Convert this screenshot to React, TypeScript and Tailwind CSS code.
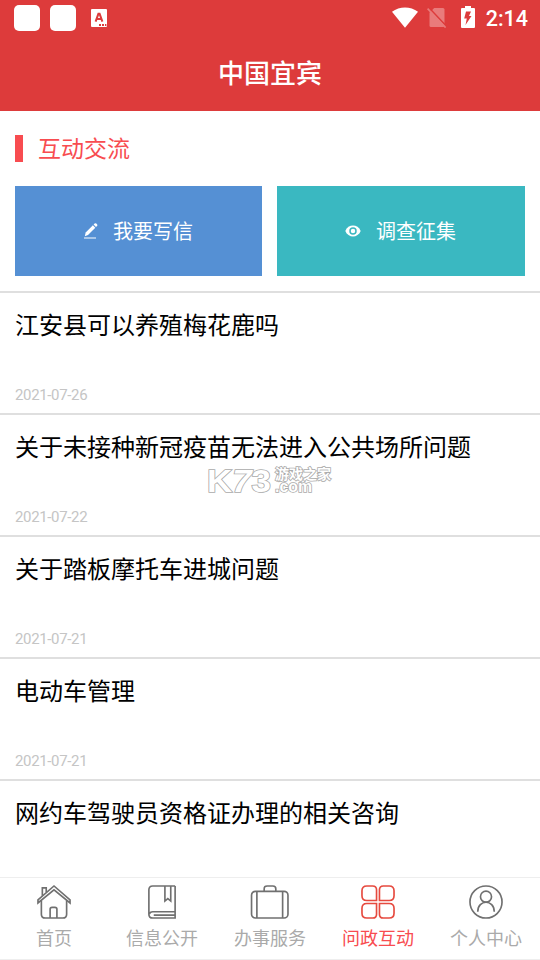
import React from 'react';

interface Letter {
  title: string;
  date?: string;
}

const letters: Letter[] = [
  { title: '江安县可以养殖梅花鹿吗', date: '2021-07-26' },
  { title: '关于未接种新冠疫苗无法进入公共场所问题', date: '2021-07-22' },
  { title: '关于踏板摩托车进城问题', date: '2021-07-21' },
  { title: '电动车管理', date: '2021-07-21' },
  { title: '网约车驾驶员资格证办理的相关咨询' },
];

function StatusBar() {
  return (
    <div className="flex h-9 items-center pl-[14px] pr-3 text-white">
      <span className="h-[26px] w-[26px] rounded-[5px] bg-white" />
      <span className="ml-[10px] h-[26px] w-[26px] rounded-[5px] bg-white" />
      <svg className="ml-[15px]" width="16" height="18" viewBox="0 0 16 18">
        <rect width="16" height="18" rx="1" fill="#fff" />
        <path d="M4.6 12.6 7.4 4.8h1.2l2.8 7.8M5.7 10h4.6" fill="none" stroke="#dd3b3b" strokeWidth="2" />
        <path d="M8 15h2v2H8zM11 15h2v2h-2zM14 15h1.4v2H14z" fill="#dd3b3b" />
      </svg>
      <div className="ml-auto flex items-center">
        <svg className="-mt-0.5" width="26" height="21" viewBox="0 0 26 21">
          <path d="M0 4.8C7.5-.9 18.5-.9 26 4.8L13 20.8z" fill="#fff" />
        </svg>
        <svg className="-mt-px ml-[9px]" width="20" height="21" viewBox="0 0 20 21">
          <path d="M7.2 1H16q1.5 0 1.5 1.5v16q0 1.5-1.5 1.5H4q-1.5 0-1.5-1.5V5.8z" fill="#e97b7b" />
          <path d="m1.8 .6 18 19.2" stroke="#dd3b3b" strokeWidth="1.6" />
          <path d="m.6 1.6 18 19" stroke="#e97b7b" strokeWidth="1.6" />
        </svg>
        <svg className="-mt-0.5 ml-[14px]" width="14" height="22" viewBox="0 0 14 22">
          <path d="M4 0h6v2h3q1 0 1 1v18q0 1-1 1H1q-1 0-1-1V3q0-1 1-1h3z" fill="#fff" />
          <path d="M5 5.5h5L8 10h2.5L4.5 19l1.3-6.5H3.2z" fill="#dd3b3b" />
        </svg>
        <span className="ml-[11px] pt-px font-[Roboto,sans-serif] text-[21.5px] font-medium leading-9">2:14</span>
      </div>
    </div>
  );
}

function PenIcon() {
  return (
    <svg width="14" height="16" viewBox="0 0 14 16" fill="#fff">
      <path d="M.8 13.2 1.7 9.6 8.9 2.3l2.4 2.4L4 12z" />
      <path d="m9.6 1.6 1-1q.8-.8 1.7 0l.7.7q.8.9 0 1.7l-1 1z" />
      <path d="M0 14.5h12v1H0z" />
    </svg>
  );
}

function EyeIcon() {
  return (
    <svg className="-mt-px" width="16" height="12" viewBox="0 0 16 12">
      <path d="M.3 6C3.2-1.3 12.8-1.3 15.7 6 12.8 13.3 3.2 13.3.3 6z" fill="#fff" />
      <circle cx="8" cy="6" r="3" fill="none" stroke="#3ab8c1" strokeWidth="1.5" />
    </svg>
  );
}

function HomeIcon() {
  return (
    <>
      <path d="M4.5 16v14q0 4 4 4h18q4 0 4-4V16" />
      <path d="M1 18.5V15.2L17.5 1 34 15.2v3.3L17.5 4.9z" />
      <path d="M5.5 11V3h4v4.5M13.5 34V25q0-2 2-2h3q2 0 2 2v9" />
    </>
  );
}

function BookIcon() {
  return (
    <>
      <path d="M31 1H8Q4 1 4 5v25q0 4 4 4h23V1M31 27.5H8q-3 0-3.5 2.5M31 31H9" />
      <path d="M20.5 1v15.5l3-2.5 3 2.5V1" />
    </>
  );
}

function CaseIcon() {
  return (
    <>
      <rect x="-1.5" y="6.5" width="37.5" height="27.5" rx="4" />
      <path d="M4 6.5V34M30.5 6.5V34M11.5 6.5V4q0-3 3-3h6q3 0 3 3v2.5" />
    </>
  );
}

function GridIcon() {
  return (
    <>
      <path d="M6 1h6q4 0 4 4v11H6q-5 0-5-5V6q0-5 5-5zM23 1h6q5 0 5 5v5q0 5-5 5H19V5q0-4 4-4z" />
      <path d="M6 19h10v11q0 4-4 4H6q-5 0-5-5v-5q0-5 5-5zM19 19h10q5 0 5 5v5q0 5-5 5h-6q-4 0-4-4z" />
    </>
  );
}

function UserIcon() {
  return (
    <>
      <circle cx="17.5" cy="17.5" r="16.5" />
      <circle cx="17.5" cy="12" r="5.7" />
      <path d="M9 27.5c0-13 17-13 17 0" />
    </>
  );
}

const tabs = [
  { label: '首页', icon: <HomeIcon /> },
  { label: '信息公开', icon: <BookIcon /> },
  { label: '办事服务', icon: <CaseIcon /> },
  { label: '问政互动', icon: <GridIcon />, active: true },
  { label: '个人中心', icon: <UserIcon /> },
];

function Watermark() {
  return (
    <svg
      className="pointer-events-none absolute left-[207px] top-[461px] font-['Liberation_Sans','Noto_Sans_CJK_SC',sans-serif] font-bold [paint-order:stroke]"
      width="126"
      height="42"
      viewBox="0 -4 126 42"
      fill="#fff"
      stroke="#aaa"
      strokeWidth="1.6"
    >
      <text x="0" y="27" fontSize="32" textLength="64" lengthAdjust="spacingAndGlyphs">
        K<tspan fontStyle="italic">7</tspan>3
      </text>
      <text x="68" y="14" fontSize="14">游戏之家</text>
      <text x="68" y="27" fontSize="16" textLength="37" lengthAdjust="spacingAndGlyphs">.com</text>
    </svg>
  );
}

export default function App() {
  return (
    <div className="relative flex h-[960px] w-[540px] flex-col overflow-hidden bg-white font-[Roboto,'Noto_Sans_CJK_SC',sans-serif]">
      <header className="h-[111px] shrink-0 bg-[#dd3b3b]">
        <StatusBar />
        <h1 className="text-center text-[26px] font-medium leading-[76px] text-white">中国宜宾</h1>
      </header>

      <main className="min-h-0 flex-1 overflow-hidden">
        <div className="flex h-[75px] items-center pl-[15px]">
          <span className="h-[27px] w-2 bg-[#f84c50]" />
          <h2 className="ml-[15px] pt-1 text-[23px] text-[#f84c50]">互动交流</h2>
        </div>
        <div className="flex gap-[15px] px-[15px] pb-[15px] text-xl text-white">
          <button className="flex h-[90px] w-[247px] items-center justify-center bg-[#5590d4]">
            <PenIcon />
            <span className="ml-[15px] pt-0.5">我要写信</span>
          </button>
          <button className="flex h-[90px] w-[248px] items-center justify-center bg-[#3ab8c1] pr-px">
            <EyeIcon />
            <span className="ml-[15px] pt-0.5">调查征集</span>
          </button>
        </div>
        <ul>
          {letters.map((item) => (
            <li key={item.title} className="flex h-[122px] flex-col justify-between border-t-2 border-[#dfdfdf] px-[15px] pb-2 pt-[15px]">
              <p className="whitespace-nowrap text-2xl leading-9 text-black">{item.title}</p>
              {item.date && <time className="text-[15px] leading-5 tracking-[-0.35px] text-[#c5c5c5]">{item.date}</time>}
            </li>
          ))}
        </ul>
      </main>

      <nav className="flex h-[83px] shrink-0 border-y border-[#eee] bg-white">
        {tabs.map((tab) => (
          <button key={tab.label} className={`flex flex-1 flex-col items-center pt-1.5 text-lg ${tab.active ? 'text-[#f84c50]' : 'text-[#aaa]'}`}>
            <svg
              className={`overflow-visible ${tab.active ? 'text-[#e64a3f]' : 'text-[#707070]'}`}
              width="34"
              height="36"
              viewBox="0 0 35 35"
              fill="none"
              stroke="currentColor"
              strokeWidth="1.7"
            >
              {tab.icon}
            </svg>
            <span className="mt-1.5 leading-[26px]">{tab.label}</span>
          </button>
        ))}
      </nav>

      <Watermark />
    </div>
  );
}
